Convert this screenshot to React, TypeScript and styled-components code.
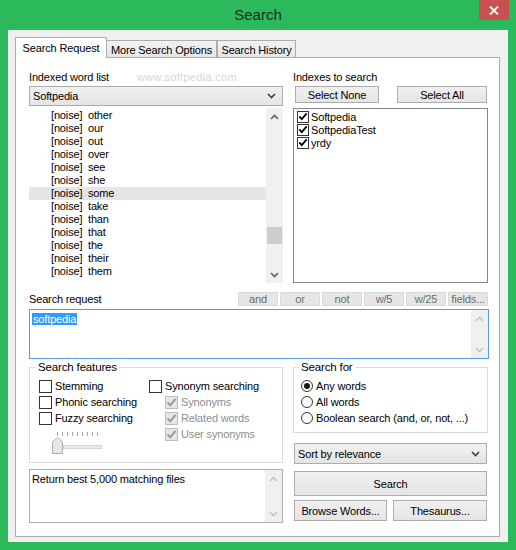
import * as React from 'react'
import styled, { createGlobalStyle } from 'styled-components'

const GlobalStyle = createGlobalStyle`
  html, body {
    margin: 0;
    padding: 0;
  }
  body {
    font-family: "Liberation Sans", Arial, sans-serif;
    font-size: 11px;
    letter-spacing: -0.15px;
    color: #000;
  }
  * {
    box-sizing: border-box;
  }
`

const Window = styled.div`
  width: 516px;
  height: 550px;
  background: #2bb95b;
  display: flex;
  flex-direction: column;
`

const TitleBar = styled.div`
  height: 30px;
  display: grid;
  grid-template-columns: 1fr auto 1fr;
  align-items: start;
`

const Title = styled.div`
  grid-column: 2;
  font-size: 15px;
  line-height: 30px;
  letter-spacing: 0;
  color: #1b2a1f;
`

const CloseButton = styled.div`
  grid-column: 3;
  justify-self: end;
  margin-right: 7px;
  width: 30px;
  height: 20px;
  background: #c75050;
  display: flex;
  align-items: center;
  justify-content: center;
`

const Client = styled.div`
  flex: 1;
  margin: 0 8px 8px;
  background: #f0f0f0;
  padding: 7px 8px 5px 7px;
  display: flex;
  flex-direction: column;
`

const TabStrip = styled.div`
  display: flex;
  align-items: flex-end;
  height: 20px;
  position: relative;
  z-index: 1;
`

const Tab = styled.div<{ $active?: boolean; $width: number; $shift?: number }>`
  width: ${p => p.$width}px;
  height: ${p => (p.$active ? 21 : 17)}px;
  margin-bottom: ${p => (p.$active ? -1 : 0)}px;
  margin-left: ${p => p.$shift || 0}px;
  border: 1px solid #adadad;
  border-bottom: none;
  background: ${p => (p.$active ? '#fff' : 'linear-gradient(#f2f2f2, #e6e6e6)')};
  display: flex;
  align-items: center;
  justify-content: center;
  padding-top: ${p => (p.$active ? 0 : 2)}px;
  position: relative;
  z-index: ${p => (p.$active ? 2 : 1)};
  white-space: nowrap;
`

const Panel = styled.div`
  flex: 1;
  background: #fff;
  border: 1px solid #adadad;
  padding: 12px 10px 0 13px;
  display: flex;
  flex-direction: column;
`

const TwoColumns = styled.div<{ $top?: number }>`
  display: grid;
  grid-template-columns: 254px 195px;
  column-gap: 10px;
  margin-top: ${p => p.$top || 0}px;
`

const Column = styled.div`
  display: flex;
  flex-direction: column;
`

const Label = styled.div`
  height: 14px;
  line-height: 14px;
  display: flex;
  white-space: nowrap;
`

const Watermark = styled.span`
  margin-left: 28px;
  color: #d6d6d6;
  letter-spacing: 0.3px;
  font-size: 11px;
`

const Combo = styled.div<{ $top: number; $height: number; $indent?: number; $width?: number }>`
  margin-top: ${p => p.$top}px;
  margin-left: ${p => p.$indent || 0}px;
  height: ${p => p.$height}px;
  width: ${p => (p.$width ? `${p.$width}px` : 'auto')};
  border: 1px solid #acacac;
  background: linear-gradient(#f0f0f0, #e5e5e5);
  display: flex;
  align-items: center;
  justify-content: space-between;
  padding: 0 6px 0 3px;
`

const WordList = styled.div`
  margin-top: 2px;
  height: 175px;
  background: #fff;
  display: flex;
`

const WordItems = styled.div`
  flex: 1;
  padding-top: 1px;
`

const WordRow = styled.div<{ $selected?: boolean }>`
  height: 13px;
  line-height: 13px;
  padding-left: 22px;
  display: flex;
  background: ${p => (p.$selected ? '#e5e5e5' : 'transparent')};
`

const Noise = styled.span`
  width: 37px;
`

const ScrollBar = styled.div`
  width: 17px;
  background: #f0f0f0;
  display: flex;
  flex-direction: column;
`

const ScrollArrow = styled.div`
  height: 17px;
  display: flex;
  align-items: center;
  justify-content: center;
`

const ScrollTrack = styled.div`
  flex: 1;
  display: flex;
  flex-direction: column;
`

const Thumb = styled.div<{ $offset: number }>`
  margin-top: ${p => p.$offset}px;
  margin-left: 1px;
  width: 15px;
  height: 17px;
  background: #cdcdcd;
`

const ButtonRow = styled.div<{ $top: number; $gap: number; $indent?: number }>`
  display: flex;
  gap: ${p => p.$gap}px;
  margin-top: ${p => p.$top}px;
  padding-left: ${p => p.$indent || 0}px;
`

const Button = styled.div<{ $width: number; $height: number }>`
  width: ${p => p.$width}px;
  height: ${p => p.$height}px;
  border: 1px solid #acacac;
  background: linear-gradient(#f0f0f0, #e5e5e5);
  display: flex;
  align-items: center;
  justify-content: center;
  white-space: nowrap;
`

const CheckList = styled.div`
  margin-top: 5px;
  height: 175px;
  border: 1px solid #828790;
  background: #fff;
  padding: 1px 3px;
`

const ListCheckRow = styled.div`
  height: 13px;
  display: flex;
  align-items: center;
  gap: 2px;
`

const RequestHeader = styled.div`
  margin-top: 9px;
  height: 14px;
  display: flex;
  justify-content: space-between;
  align-items: center;
`

const OpButtons = styled.div`
  display: flex;
  gap: 2px;
  margin-right: 1px;
`

const OpButton = styled.div`
  width: 40px;
  height: 14px;
  background: #e6e6e6;
  border: 1px solid #dadada;
  color: #6d6d6d;
  display: flex;
  align-items: center;
  justify-content: center;
  line-height: 12px;
`

const TextBox = styled.div<{ $top: number; $height: number; $focus?: boolean }>`
  margin-top: ${p => p.$top}px;
  height: ${p => p.$height}px;
  border: 1px solid ${p => (p.$focus ? '#569de5' : '#abadb3')};
  background: #fff;
  display: flex;
`

const TextContent = styled.div`
  flex: 1;
  padding: 3px 2px;
  line-height: 13px;
`

const Selection = styled.span`
  background: #3399ff;
  color: #fff;
  padding: 0 1px;
`

const Group = styled.fieldset<{ $height: number; $inset: number }>`
  margin: 0;
  height: ${p => p.$height}px;
  min-width: 0;
  border: 1px solid #dcdcdc;
  padding: 4px 0 0 ${p => p.$inset}px;
`

const Legend = styled.legend<{ $shift: number }>`
  margin-left: ${p => p.$shift}px;
  padding: 0 2px;
  line-height: 14px;
  font-size: 11.5px;
`

const FeatureGrid = styled.div`
  display: grid;
  grid-template-columns: 110px auto;
`

const OptionRow = styled.div<{ $indent?: number; $disabled?: boolean }>`
  height: 16px;
  display: flex;
  align-items: center;
  gap: 3px;
  padding-left: ${p => p.$indent || 0}px;
  color: ${p => (p.$disabled ? '#8d8d8d' : '#000')};
  white-space: nowrap;
`

const Box = styled.span<{ $disabled?: boolean; $size?: number }>`
  width: ${p => p.$size || 13}px;
  height: ${p => p.$size || 13}px;
  border: 1px solid ${p => (p.$disabled ? '#bcbcbc' : '#333')};
  background: ${p => (p.$disabled ? '#e6e6e6' : '#fff')};
  display: flex;
  align-items: center;
  justify-content: center;
  flex: none;
`

const Radio = styled.span<{ $on?: boolean }>`
  width: 12px;
  height: 12px;
  border-radius: 50%;
  border: 1px solid #333;
  background: #fff;
  display: flex;
  align-items: center;
  justify-content: center;
  flex: none;
  &::after {
    content: '';
    width: 6px;
    height: 6px;
    border-radius: 50%;
    background: ${p => (p.$on ? '#1a1a1a' : 'transparent')};
  }
`

const SliderWrap = styled.div`
  margin: 6px 0 0 13px;
`

const RightStack = styled.div`
  display: flex;
  flex-direction: column;
`

const Chevron = ({ up, color = '#606060' }: { up?: boolean; color?: string }) => (
  <svg width='9' height='6' viewBox='0 0 9 6'>
    <path
      d={up ? 'M1 5 L4.5 1.5 L8 5' : 'M1 1 L4.5 4.5 L8 1'}
      fill='none'
      stroke={color}
      strokeWidth='1.6'
    />
  </svg>
)

const CheckMark = ({ color = '#000' }: { color?: string }) => (
  <svg width='11' height='11' viewBox='0 0 11 11'>
    <path d='M1.5 5.5 L4.2 8.3 L9.5 2' fill='none' stroke={color} strokeWidth='2' />
  </svg>
)

const CheckBox = ({ checked, disabled, size }: { checked?: boolean; disabled?: boolean; size?: number }) => (
  <Box $disabled={disabled} $size={size}>
    {checked && <CheckMark color={disabled ? '#9a9a9a' : '#000'} />}
  </Box>
)

const VScroll = ({ thumb, disabled }: { thumb?: number; disabled?: boolean }) => (
  <ScrollBar>
    <ScrollArrow>
      <Chevron up color={disabled ? '#c4c4c4' : '#606060'} />
    </ScrollArrow>
    <ScrollTrack>{thumb !== undefined && <Thumb $offset={thumb} />}</ScrollTrack>
    <ScrollArrow>
      <Chevron color={disabled ? '#c4c4c4' : '#606060'} />
    </ScrollArrow>
  </ScrollBar>
)

const words = ['other', 'our', 'out', 'over', 'see', 'she', 'some', 'take', 'than', 'that', 'the', 'their', 'them']
const indexes = ['Softpedia', 'SoftpediaTest', 'yrdy']
const ops = ['and', 'or', 'not', 'w/5', 'w/25', 'fields...']

const Slider = () => (
  <svg width='52' height='23' viewBox='0 0 52 23'>
    {Array.from({ length: 9 }).map((_, i) => (
      <line key={i} x1={5.5 + i * 5} y1='0' x2={5.5 + i * 5} y2='4' stroke='#a8a8a8' strokeWidth='1' />
    ))}
    <rect x='11.5' y='13.5' width='38' height='3' fill='#e7eaea' stroke='#d6d6d6' />
    <path d='M5.5 5.5 L10.5 10 L10.5 21.5 L0.5 21.5 L0.5 10 Z' fill='#e6e6e6' stroke='#acacac' />
  </svg>
)

export default function App() {
  return (
    <Window>
      <GlobalStyle />
      <TitleBar>
        <Title>Search</Title>
        <CloseButton>
          <svg width='10' height='9' viewBox='0 0 10 9'>
            <path d='M1 0.5 L9 8.5 M9 0.5 L1 8.5' stroke='#fff' strokeWidth='1.8' />
          </svg>
        </CloseButton>
      </TitleBar>
      <Client>
        <TabStrip>
          <Tab $active $width={92}>Search Request</Tab>
          <Tab $width={111} $shift={-1}>More Search Options</Tab>
          <Tab $width={79}>Search History</Tab>
        </TabStrip>
        <Panel>
          <TwoColumns>
            <Column>
              <Label>
                Indexed word list
                <Watermark>www.softpedia.com</Watermark>
              </Label>
              <Combo $top={2} $height={20}>
                <span>Softpedia</span>
                <Chevron color='#404040' />
              </Combo>
              <WordList>
                <WordItems>
                  {words.map(w => (
                    <WordRow key={w} $selected={w === 'some'}>
                      <Noise>[noise]</Noise>
                      <span>{w}</span>
                    </WordRow>
                  ))}
                </WordItems>
                <VScroll thumb={102} />
              </WordList>
            </Column>
            <Column>
              <Label>Indexes to search</Label>
              <ButtonRow $top={2} $gap={18} $indent={2}>
                <Button $width={84} $height={17}>Select None</Button>
                <Button $width={90} $height={17}>Select All</Button>
              </ButtonRow>
              <CheckList>
                {indexes.map(name => (
                  <ListCheckRow key={name}>
                    <CheckBox checked size={12} />
                    <span>{name}</span>
                  </ListCheckRow>
                ))}
              </CheckList>
            </Column>
          </TwoColumns>

          <RequestHeader>
            <span>Search request</span>
            <OpButtons>
              {ops.map(op => (
                <OpButton key={op}>{op}</OpButton>
              ))}
            </OpButtons>
          </RequestHeader>
          <TextBox $top={3} $height={50} $focus>
            <TextContent>
              <Selection>softpedia</Selection>
            </TextContent>
            <VScroll disabled />
          </TextBox>

          <TwoColumns $top={1}>
            <Column>
              <Group $height={103} $inset={9}>
                <Legend $shift={-3}>Search features</Legend>
                <FeatureGrid>
                  <div>
                    <OptionRow>
                      <CheckBox />
                      Stemming
                    </OptionRow>
                    <OptionRow>
                      <CheckBox />
                      Phonic searching
                    </OptionRow>
                    <OptionRow>
                      <CheckBox />
                      Fuzzy searching
                    </OptionRow>
                    <SliderWrap>
                      <Slider />
                    </SliderWrap>
                  </div>
                  <div>
                    <OptionRow>
                      <CheckBox />
                      Synonym searching
                    </OptionRow>
                    <OptionRow $indent={16} $disabled>
                      <CheckBox checked disabled />
                      Synonyms
                    </OptionRow>
                    <OptionRow $indent={16} $disabled>
                      <CheckBox checked disabled />
                      Related words
                    </OptionRow>
                    <OptionRow $indent={16} $disabled>
                      <CheckBox checked disabled />
                      User synonyms
                    </OptionRow>
                  </div>
                </FeatureGrid>
              </Group>
              <TextBox $top={6} $height={54}>
                <TextContent>Return best 5,000 matching files</TextContent>
                <VScroll disabled />
              </TextBox>
            </Column>
            <RightStack>
              <Group $height={73} $inset={7}>
                <Legend $shift={-2}>Search for</Legend>
                <OptionRow>
                  <Radio $on />
                  Any words
                </OptionRow>
                <OptionRow>
                  <Radio />
                  All words
                </OptionRow>
                <OptionRow>
                  <Radio />
                  Boolean search (and, or, not, ...)
                </OptionRow>
              </Group>
              <Combo $top={10} $height={21} $indent={1} $width={193}>
                <span>Sort by relevance</span>
                <Chevron color='#404040' />
              </Combo>
              <ButtonRow $top={7} $gap={0} $indent={1}>
                <Button $width={193} $height={25}>Search</Button>
              </ButtonRow>
              <ButtonRow $top={4} $gap={6} $indent={1}>
                <Button $width={93} $height={21}>Browse Words...</Button>
                <Button $width={94} $height={21}>Thesaurus...</Button>
              </ButtonRow>
            </RightStack>
          </TwoColumns>
        </Panel>
      </Client>
    </Window>
  )
}
